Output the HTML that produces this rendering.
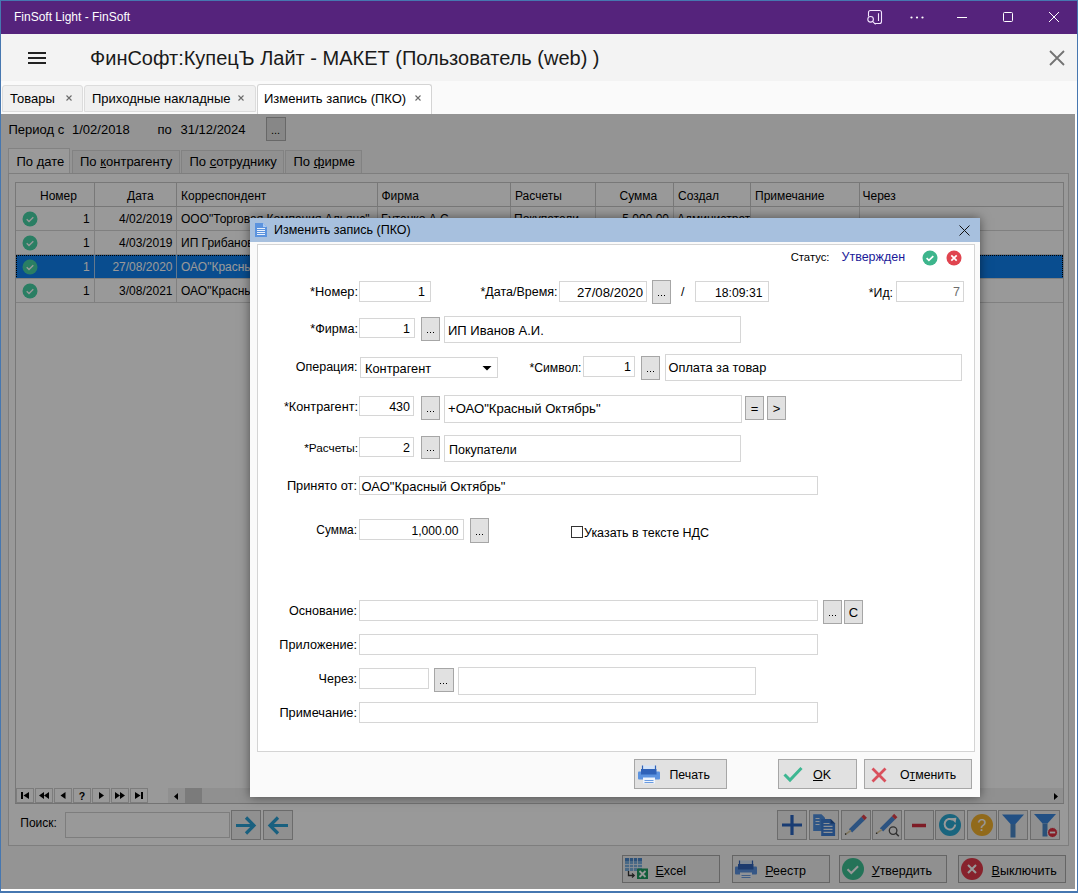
<!DOCTYPE html>
<html><head><meta charset="utf-8">
<style>
*{box-sizing:border-box;margin:0;padding:0}
html,body{width:1078px;height:893px;overflow:hidden;background:#fff}
body{font-family:"Liberation Sans",sans-serif;font-size:13px;color:#000;position:relative}
.a{position:absolute}
.t{position:absolute;white-space:nowrap;line-height:1}
/* window */
#win{left:0;top:0;width:1078px;height:893px;border:1px solid #4677b0;border-width:1px 1px 2px 1px;background:#fff}
#titlebar{left:1px;top:1px;width:1076px;height:33px;background:#55237c}
#hdr{left:1px;top:34px;width:1076px;height:47px;background:#f3f3f3}
#tabstrip{left:1px;top:81px;width:1076px;height:33px;background:#fafafa}
.tab{position:absolute;top:85px;height:27px;background:#f0f0f0;border:1px solid #dcdcdc;border-radius:3px 3px 0 0}
.tab.act{top:84px;height:30px;background:#fff;border-color:#d4d4d4;border-bottom:none}
/* dimmed app */
#app{left:1px;top:114px;width:1074px;height:775px;background:#9b9b9b}
.dbtn{position:absolute;background:#979797;border:1px solid #6f6f6f}
.gtab{position:absolute;top:149px;height:24px;background:#989898;border:1px solid #8a8a8a;border-bottom:none}
/* modal */
#modal{left:250px;top:218px;width:730px;height:579px;background:#fafafa;box-shadow:0 0 10px rgba(0,0,0,.5)}
#mtitle{left:0;top:0;width:730px;height:23.5px;background:#a7c0de}
#mpanel{left:7px;top:26px;width:718px;height:508px;background:#fff;border:1px solid #d4d4d4}
.in{position:absolute;background:#fff;border:1px solid #d6d6d6;height:21px}
.bt{position:absolute;background:#e1e1e1;border:1px solid #a6a6a6}
.lbl{position:absolute;white-space:nowrap;line-height:1;font-size:12.5px;text-align:right}
</style></head>
<body>
<div id="win" class="a"></div>
<div id="titlebar" class="a"></div>
<div class="t" style="left:14px;top:11px;color:#fff;font-size:12px">FinSoft Light - FinSoft</div>
<div id="hdr" class="a"></div>
<svg class="a" style="left:860px;top:0px" width="218" height="33" viewBox="860 0 218 33">
<path d="M868.5 16.5V12.5a2 2 0 0 1 2-2h9a2 2 0 0 1 2 2v9a2 2 0 0 1-2 2h-5" fill="none" stroke="#f4e6ff" stroke-width="1.1"/>
<circle cx="870.6" cy="19.3" r="2.8" fill="none" stroke="#f4e6ff" stroke-width="1.1"/>
<path d="M872.6 21.4l3 3M878.5 13.2v7.8" stroke="#f4e6ff" stroke-width="1.1"/>
<circle cx="911.5" cy="17.5" r="1.1" fill="#fff"/><circle cx="917" cy="17.5" r="1.1" fill="#fff"/><circle cx="922.5" cy="17.5" r="1.1" fill="#fff"/>
<path d="M957 17.5h10" stroke="#fff" stroke-width="1"/>
<rect x="1003.5" y="12.5" width="9" height="9" rx="1" fill="none" stroke="#fff" stroke-width="1"/>
<path d="M1049 12l10 10M1059 12l-10 10" stroke="#fff" stroke-width="1"/>
</svg>
<svg class="a" style="left:1048px;top:49px" width="18" height="18" viewBox="0 0 18 18"><path d="M2 2l14 14M16 2L2 16" stroke="#737373" stroke-width="1.8"/></svg>

<div id="tabstrip" class="a"></div>
<!-- hamburger -->
<div class="a" style="left:28px;top:52px;width:18px;height:2px;background:#222"></div>
<div class="a" style="left:28px;top:57px;width:18px;height:2px;background:#222"></div>
<div class="a" style="left:28px;top:62px;width:18px;height:2px;background:#222"></div>
<div class="t" style="left:90px;top:48px;font-size:20px;color:#1a1a1a">ФинСофт:КупецЪ Лайт - МАКЕТ (Пользователь (web) )</div>

<div class="tab" style="left:2px;width:81px"></div>
<div class="t" style="left:10px;top:92px;font-size:13px">Товары</div>
<svg class="a" style="left:66px;top:95px" width="6" height="6" viewBox="0 0 6 6"><path d="M0.5 0.5l5 5M5.5 0.5l-5 5" stroke="#6a6a6a" stroke-width="1.1"/></svg>
<div class="tab" style="left:84px;width:172px"></div>
<div class="t" style="left:92px;top:92px;font-size:13px">Приходные накладные</div>
<svg class="a" style="left:238px;top:95px" width="6" height="6" viewBox="0 0 6 6"><path d="M0.5 0.5l5 5M5.5 0.5l-5 5" stroke="#6a6a6a" stroke-width="1.1"/></svg>
<div class="tab act" style="left:257px;width:175px"></div>
<div class="t" style="left:264px;top:92px;font-size:13px">Изменить запись (ПКО)</div>
<svg class="a" style="left:415px;top:95px" width="6" height="6" viewBox="0 0 6 6"><path d="M0.5 0.5l5 5M5.5 0.5l-5 5" stroke="#6a6a6a" stroke-width="1.1"/></svg>

<div id="app" class="a" style="background:#f7f7f7">
  <!-- period -->
  <div class="t" style="left:7.5px;top:9px;font-size:13px">Период с</div>
  <div class="t" style="left:71px;top:9px;font-size:13px">1/02/2018</div>
  <div class="t" style="left:156.5px;top:9px;font-size:13px">по</div>
  <div class="t" style="left:179.5px;top:9px;font-size:13px">31/12/2024</div>
  <div class="a" style="left:265px;top:3px;width:20px;height:24px;background:#e1e1e1;border:1px solid #adadad"></div>
  <div class="t" style="left:270px;top:11px;font-size:11px">...</div>
  <!-- tabs -->
  <div class="a" style="left:7px;top:34px;width:62px;height:25px;background:#fff;border:1px solid #d9d9d9;border-bottom:none"></div>
  <div class="t" style="left:15.5px;top:41.2px;font-size:13px">По дате</div>
  <div class="a" style="left:70.5px;top:35.5px;width:108px;height:23px;background:#f0f0f0;border:1px solid #d9d9d9;border-bottom:none"></div>
  <div class="t" style="left:79px;top:41.2px;font-size:13px">По <u>к</u>онтрагенту</div>
  <div class="a" style="left:180px;top:35.5px;width:103px;height:23px;background:#f0f0f0;border:1px solid #d9d9d9;border-bottom:none"></div>
  <div class="t" style="left:188.5px;top:41.2px;font-size:13px">По <u>с</u>отруднику</div>
  <div class="a" style="left:284px;top:35.5px;width:77px;height:23px;background:#f0f0f0;border:1px solid #d9d9d9;border-bottom:none"></div>
  <div class="t" style="left:292.5px;top:41.2px;font-size:13px">По <u>ф</u>ирме</div>
  <!-- outer panel -->
  <div class="a" style="left:7px;top:59px;width:1061px;height:673px;background:#fff;border:1px solid #d2d2d2"></div>
  <!--GR-->
  <div class="a" style="left:14px;top:68px;width:1049px;height:622px;background:#fff;border:1px solid #c8c8c8"></div>
  <div class="a" style="left:15px;top:92px;width:1047px;height:1px;background:#c6c6c6"></div>
  <div class="a" style="left:93px;top:69px;width:1px;height:23px;background:#c8c8c8"></div>
  <div class="a" style="left:175px;top:69px;width:1px;height:23px;background:#c8c8c8"></div>
  <div class="a" style="left:376px;top:69px;width:1px;height:23px;background:#c8c8c8"></div>
  <div class="a" style="left:509px;top:69px;width:1px;height:23px;background:#c8c8c8"></div>
  <div class="a" style="left:594px;top:69px;width:1px;height:23px;background:#c8c8c8"></div>
  <div class="a" style="left:672px;top:69px;width:1px;height:23px;background:#c8c8c8"></div>
  <div class="a" style="left:749px;top:69px;width:1px;height:23px;background:#c8c8c8"></div>
  <div class="a" style="left:858px;top:69px;width:1px;height:23px;background:#c8c8c8"></div>
  <div class="t" style="left:39px;top:76.34px;font-size:12px">Номер</div>
  <div class="t" style="left:126px;top:76.34px;font-size:12px">Дата</div>
  <div class="t" style="left:180px;top:76.34px;font-size:12px">Корреспондент</div>
  <div class="t" style="left:380.5px;top:76.34px;font-size:12px">Фирма</div>
  <div class="t" style="left:514px;top:76.34px;font-size:12px">Расчеты</div>
  <div class="t" style="left:618.5px;top:76.34px;font-size:12px">Сумма</div>
  <div class="t" style="left:677px;top:76.34px;font-size:12px">Создал</div>
  <div class="t" style="left:754px;top:76.34px;font-size:12px">Примечание</div>
  <div class="t" style="left:861.5px;top:76.34px;font-size:12px">Через</div>
  <div class="a" style="left:15px;top:116px;width:1047px;height:1px;background:#d5d5d5"></div>
  <div class="a" style="left:93px;top:93px;width:1px;height:23px;background:#d5d5d5"></div>
  <div class="a" style="left:175px;top:93px;width:1px;height:23px;background:#d5d5d5"></div>
  <div class="a" style="left:376px;top:93px;width:1px;height:23px;background:#d5d5d5"></div>
  <div class="a" style="left:509px;top:93px;width:1px;height:23px;background:#d5d5d5"></div>
  <div class="a" style="left:594px;top:93px;width:1px;height:23px;background:#d5d5d5"></div>
  <div class="a" style="left:672px;top:93px;width:1px;height:23px;background:#d5d5d5"></div>
  <div class="a" style="left:749px;top:93px;width:1px;height:23px;background:#d5d5d5"></div>
  <div class="a" style="left:858px;top:93px;width:1px;height:23px;background:#d5d5d5"></div>
  <svg class="a" style="left:21px;top:97px" width="16" height="16" viewBox="0 0 16 16"><circle cx="8" cy="8" r="7.5" fill="#46d2a6"/><path d="M4.7 8.3l2.3 2.2 4.3-4.3" fill="none" stroke="#fff" stroke-width="1.4"/></svg>
  <div class="t" style="right:985.3px;top:99.24px;font-size:12px;color:#000">1</div>
  <div class="t" style="right:902.5px;top:99.24px;font-size:12px;color:#000">4/02/2019</div>
  <div class="a" style="left:176px;top:93px;width:199px;height:23px;overflow:hidden"><div class="t" style="left:4px;top:6.24px;font-size:12px;color:#000">ООО"Торговая Компания Альянс"</div></div>
  <div class="t" style="left:380px;top:99.24px;font-size:12px;color:#000">Бутенко А.С.</div>
  <div class="t" style="left:513px;top:99.24px;font-size:12px;color:#000">Покупатели</div>
  <div class="t" style="right:406px;top:99.24px;font-size:12px;color:#000">5,000.00</div>
  <div class="a" style="left:673px;top:93px;width:76px;height:23px;overflow:hidden"><div class="t" style="left:3px;top:6.24px;font-size:12px;color:#000">Администратор</div></div>
  <div class="a" style="left:15px;top:140px;width:1047px;height:1px;background:#d5d5d5"></div>
  <div class="a" style="left:93px;top:117px;width:1px;height:23px;background:#d5d5d5"></div>
  <div class="a" style="left:175px;top:117px;width:1px;height:23px;background:#d5d5d5"></div>
  <div class="a" style="left:376px;top:117px;width:1px;height:23px;background:#d5d5d5"></div>
  <div class="a" style="left:509px;top:117px;width:1px;height:23px;background:#d5d5d5"></div>
  <div class="a" style="left:594px;top:117px;width:1px;height:23px;background:#d5d5d5"></div>
  <div class="a" style="left:672px;top:117px;width:1px;height:23px;background:#d5d5d5"></div>
  <div class="a" style="left:749px;top:117px;width:1px;height:23px;background:#d5d5d5"></div>
  <div class="a" style="left:858px;top:117px;width:1px;height:23px;background:#d5d5d5"></div>
  <svg class="a" style="left:21px;top:121px" width="16" height="16" viewBox="0 0 16 16"><circle cx="8" cy="8" r="7.5" fill="#46d2a6"/><path d="M4.7 8.3l2.3 2.2 4.3-4.3" fill="none" stroke="#fff" stroke-width="1.4"/></svg>
  <div class="t" style="right:985.3px;top:123.24px;font-size:12px;color:#000">1</div>
  <div class="t" style="right:902.5px;top:123.24px;font-size:12px;color:#000">4/03/2019</div>
  <div class="a" style="left:176px;top:117px;width:199px;height:23px;overflow:hidden"><div class="t" style="left:4px;top:6.24px;font-size:12px;color:#000">ИП Грибанов В.П.</div></div>
  <div class="a" style="left:15px;top:141px;width:1047px;height:24px;background:#1080ee;outline:1px dotted #000;outline-offset:-1px"></div>
  <div class="a" style="left:15px;top:164px;width:1047px;height:1px;background:#d5d5d5"></div>
  <div class="a" style="left:93px;top:141px;width:1px;height:23px;background:#a8c8ea"></div>
  <div class="a" style="left:175px;top:141px;width:1px;height:23px;background:#a8c8ea"></div>
  <div class="a" style="left:376px;top:141px;width:1px;height:23px;background:#a8c8ea"></div>
  <div class="a" style="left:509px;top:141px;width:1px;height:23px;background:#a8c8ea"></div>
  <div class="a" style="left:594px;top:141px;width:1px;height:23px;background:#a8c8ea"></div>
  <div class="a" style="left:672px;top:141px;width:1px;height:23px;background:#a8c8ea"></div>
  <div class="a" style="left:749px;top:141px;width:1px;height:23px;background:#a8c8ea"></div>
  <div class="a" style="left:858px;top:141px;width:1px;height:23px;background:#a8c8ea"></div>
  <svg class="a" style="left:21px;top:145px" width="16" height="16" viewBox="0 0 16 16"><circle cx="8" cy="8" r="7.5" fill="#46d2a6"/><path d="M4.7 8.3l2.3 2.2 4.3-4.3" fill="none" stroke="#fff" stroke-width="1.4"/></svg>
  <div class="t" style="right:985.3px;top:147.24px;font-size:12px;color:#fff">1</div>
  <div class="t" style="right:902.5px;top:147.24px;font-size:12px;color:#fff">27/08/2020</div>
  <div class="a" style="left:176px;top:141px;width:199px;height:23px;overflow:hidden"><div class="t" style="left:4px;top:6.24px;font-size:12px;color:#fff">ОАО"Красный Октябрь"</div></div>
  <div class="a" style="left:15px;top:188px;width:1047px;height:1px;background:#d5d5d5"></div>
  <div class="a" style="left:93px;top:165px;width:1px;height:23px;background:#d5d5d5"></div>
  <div class="a" style="left:175px;top:165px;width:1px;height:23px;background:#d5d5d5"></div>
  <div class="a" style="left:376px;top:165px;width:1px;height:23px;background:#d5d5d5"></div>
  <div class="a" style="left:509px;top:165px;width:1px;height:23px;background:#d5d5d5"></div>
  <div class="a" style="left:594px;top:165px;width:1px;height:23px;background:#d5d5d5"></div>
  <div class="a" style="left:672px;top:165px;width:1px;height:23px;background:#d5d5d5"></div>
  <div class="a" style="left:749px;top:165px;width:1px;height:23px;background:#d5d5d5"></div>
  <div class="a" style="left:858px;top:165px;width:1px;height:23px;background:#d5d5d5"></div>
  <svg class="a" style="left:21px;top:169px" width="16" height="16" viewBox="0 0 16 16"><circle cx="8" cy="8" r="7.5" fill="#46d2a6"/><path d="M4.7 8.3l2.3 2.2 4.3-4.3" fill="none" stroke="#fff" stroke-width="1.4"/></svg>
  <div class="t" style="right:985.3px;top:171.24px;font-size:12px;color:#000">1</div>
  <div class="t" style="right:902.5px;top:171.24px;font-size:12px;color:#000">3/08/2021</div>
  <div class="a" style="left:176px;top:165px;width:199px;height:23px;overflow:hidden"><div class="t" style="left:4px;top:6.24px;font-size:12px;color:#000">ОАО"Красный Октябрь"</div></div>
<!--/GR-->
  <!-- nav bar -->
  <div class="a" style="left:15px;top:674px;width:18px;height:15px;background:#fff;border:1px solid #cfcfcf"></div>
  <svg class="a" style="left:15px;top:674px" width="18" height="15" viewBox="0 0 18 15" fill="#000"><rect x="5" y="4" width="2" height="7"/><path d="M13 4v7L7.5 7.5z"/></svg>
  <div class="a" style="left:34px;top:674px;width:18px;height:15px;background:#fff;border:1px solid #cfcfcf"></div>
  <svg class="a" style="left:34px;top:674px" width="18" height="15" viewBox="0 0 18 15" fill="#000"><path d="M9 4v7L4 7.5zM14 4v7L9 7.5z"/></svg>
  <div class="a" style="left:53px;top:674px;width:18px;height:15px;background:#fff;border:1px solid #cfcfcf"></div>
  <svg class="a" style="left:53px;top:674px" width="18" height="15" viewBox="0 0 18 15" fill="#000"><path d="M11.5 4v7L6.5 7.5z"/></svg>
  <div class="a" style="left:72px;top:674px;width:18px;height:15px;background:#fff;border:1px solid #cfcfcf"></div>
  <svg class="a" style="left:72px;top:674px" width="18" height="15" viewBox="0 0 18 15" fill="#000"><text x="9" y="11.5" font-family="Liberation Sans" font-weight="bold" font-size="10.5" text-anchor="middle">?</text></svg>
  <div class="a" style="left:91px;top:674px;width:18px;height:15px;background:#fff;border:1px solid #cfcfcf"></div>
  <svg class="a" style="left:91px;top:674px" width="18" height="15" viewBox="0 0 18 15" fill="#000"><path d="M7 4v7L12 7.5z"/></svg>
  <div class="a" style="left:110px;top:674px;width:18px;height:15px;background:#fff;border:1px solid #cfcfcf"></div>
  <svg class="a" style="left:110px;top:674px" width="18" height="15" viewBox="0 0 18 15" fill="#000"><path d="M4 4v7L9 7.5zM9 4v7L14 7.5z"/></svg>
  <div class="a" style="left:129px;top:674px;width:18px;height:15px;background:#fff;border:1px solid #cfcfcf"></div>
  <svg class="a" style="left:129px;top:674px" width="18" height="15" viewBox="0 0 18 15" fill="#000"><path d="M5 4v7L10.5 7.5z"/><rect x="11" y="4" width="2" height="7"/></svg>
  <div class="a" style="left:167px;top:674px;width:895px;height:16px;background:#f0f0f0"></div>
  <div class="a" style="left:184px;top:674px;width:17px;height:16px;background:#cdcdcd"></div>
  <svg class="a" style="left:167px;top:674px" width="17" height="16"><path d="M10 5v7L6 8.5z" fill="#000"/></svg>
  <svg class="a" style="left:1046px;top:674px" width="17" height="16"><path d="M7 5v7L11 8.5z" fill="#000"/></svg>
  <div class="a" style="left:14px;top:689px;width:1049px;height:1px;background:#c0c0c0"></div>
  <!-- search -->
  <div class="t" style="left:19.3px;top:703px;font-size:12px">Поиск:</div>
  <div class="a" style="left:64px;top:698px;width:165px;height:26px;background:#fff;border:1px solid #d0d0d0"></div>
  <div class="a" style="left:230px;top:696px;width:30px;height:30px;background:#f0f0f0;border:1px solid #b4b4b4"></div>
  <div class="a" style="left:262px;top:696px;width:30px;height:30px;background:#f0f0f0;border:1px solid #b4b4b4"></div>
  <svg class="a" style="left:230px;top:696px" width="30" height="30" viewBox="0 0 30 30"><path d="M5 15.5h18M15 7.5l8 8-8 8" fill="none" stroke="#2aa0d4" stroke-width="3.2"/></svg>
  <svg class="a" style="left:262px;top:696px" width="30" height="30" viewBox="0 0 30 30"><path d="M25 15.5H7M15 7.5l-8 8 8 8" fill="none" stroke="#2aa0d4" stroke-width="3.2"/></svg>
  <div class="a" style="left:776px;top:696px;width:30px;height:30px;background:#f0f0f0;border:1px solid #b4b4b4"></div>
  <svg class="a" style="left:776px;top:696px" width="30" height="30" viewBox="0 0 30 30"><path d="M15 5v20M5 15h20" stroke="#2a64c0" stroke-width="3.2"/></svg>
  <div class="a" style="left:808px;top:696px;width:30px;height:30px;background:#f0f0f0;border:1px solid #b4b4b4"></div>
  <svg class="a" style="left:808px;top:696px" width="30" height="30" viewBox="0 0 30 30"><path d="M4.2 4.2h8.3l3.5 3.5v13.3H4.2z" fill="#4f8fe0"/><path d="M6.5 8.5h4M6.5 11.5h4M6.5 14.5h4" stroke="#e8f0fb" stroke-width="1"/><path d="M12.2 9h9.4l4.5 4.5V26H12.2z" fill="#3f7fd6"/><path d="M21.6 9v4.5h4.5z" fill="#24559e"/><path d="M14.5 13.5h6M14.5 16.4h9M14.5 19.4h9M14.5 22.4h9" stroke="#e8f0fb" stroke-width="1.1"/></svg>
  <div class="a" style="left:839.5px;top:696px;width:30px;height:30px;background:#f0f0f0;border:1px solid #b4b4b4"></div>
  <svg class="a" style="left:839.5px;top:696px" width="30" height="30" viewBox="0 0 30 30"><path d="M9.5 20.8L22 8.5" stroke="#4a8ad8" stroke-width="4.6"/><path d="M22 8.5l2.3-2.3" stroke="#e0404a" stroke-width="4.6"/><path d="M4.4 24.3l5.5-3.8" stroke="#d8c8a0" stroke-width="1.6"/><circle cx="4.6" cy="24.1" r="0.8" fill="#333"/></svg>
  <div class="a" style="left:871px;top:696px;width:30px;height:30px;background:#f0f0f0;border:1px solid #b4b4b4"></div>
  <svg class="a" style="left:871px;top:696px" width="30" height="30" viewBox="0 0 30 30"><path d="M9.5 19.8L21.5 7.8" stroke="#4a8ad8" stroke-width="4.6"/><path d="M21.5 7.8l2.3-2.3" stroke="#e0404a" stroke-width="4.6"/><path d="M4.4 23.4l5.5-3.8" stroke="#d8c8a0" stroke-width="1.6"/><circle cx="4.6" cy="23.2" r="0.8" fill="#333"/><circle cx="21.1" cy="20.6" r="3.8" fill="none" stroke="#505050" stroke-width="1.3"/><path d="M23.8 23.3l3 3" stroke="#505050" stroke-width="1.6"/></svg>
  <div class="a" style="left:902.5px;top:696px;width:30px;height:30px;background:#f0f0f0;border:1px solid #b4b4b4"></div>
  <svg class="a" style="left:902.5px;top:696px" width="30" height="30" viewBox="0 0 30 30"><path d="M8 15.5h14" stroke="#d23040" stroke-width="3.5"/></svg>
  <div class="a" style="left:934px;top:696px;width:30px;height:30px;background:#f0f0f0;border:1px solid #b4b4b4"></div>
  <svg class="a" style="left:934px;top:696px" width="30" height="30" viewBox="0 0 30 30"><circle cx="15" cy="15" r="11" fill="#2aa8d2"/><path d="M20.2 14.5a5.3 5.3 0 1 1-2.2-4.6" fill="none" stroke="#fff" stroke-width="2"/><path d="M15.8 8.3l5.6-0.6-0.9 5.4z" fill="#fff"/></svg>
  <div class="a" style="left:965.5px;top:696px;width:30px;height:30px;background:#f0f0f0;border:1px solid #b4b4b4"></div>
  <svg class="a" style="left:965.5px;top:696px" width="30" height="30" viewBox="0 0 30 30"><circle cx="15" cy="15" r="11" fill="#f2b12e"/><text x="15" y="20.8" font-family="Liberation Sans" font-size="16" text-anchor="middle" fill="#fff">?</text></svg>
  <div class="a" style="left:997px;top:696px;width:30px;height:30px;background:#f0f0f0;border:1px solid #b4b4b4"></div>
  <svg class="a" style="left:997px;top:696px" width="30" height="30" viewBox="0 0 30 30"><path d="M4 4.5h22l-8.5 9.5h-5z" fill="#3a86dc"/><path d="M12.5 14h5v13.5h-5z" fill="#4a88c8"/></svg>
  <div class="a" style="left:1028.5px;top:696px;width:30px;height:30px;background:#f0f0f0;border:1px solid #b4b4b4"></div>
  <svg class="a" style="left:1028.5px;top:696px" width="30" height="30" viewBox="0 0 30 30"><path d="M4 4h22l-8.5 9.5h-5z" fill="#3a86dc"/><path d="M12.5 13.5h5v13h-5z" fill="#4a88c8"/><circle cx="22.5" cy="22.5" r="5" fill="#e03040" stroke="#f0f0f0" stroke-width="1"/><path d="M19.8 22.5h5.4" stroke="#fff" stroke-width="1.8"/></svg>
  <div class="a" style="left:621px;top:741px;width:98px;height:28px;background:#f0f0f0;border:1px solid #a9a9a9"></div>
  <div class="t" style="left:654.5px;top:751.2px;font-size:12.5px"><u>E</u>xcel</div>
  <svg class="a" style="left:621px;top:741px" width="30" height="28" viewBox="622 855 30 28"><rect x="625" y="858" width="17" height="13" fill="#7ab0e0"/><rect x="625" y="858" width="17" height="3" fill="#4a88cc"/><path d="M625 864.5h17M625 867.5h17M629.5 858v13M633.5 858v13M637.5 858v13" stroke="#e8f0f8" stroke-width="0.8"/><rect x="637" y="868.5" width="11" height="10.5" fill="#1f9c62"/><path d="M639.5 871l6 6M645.5 871l-6 6" stroke="#fff" stroke-width="1.8"/><path d="M628.5 871v4.5h5" fill="none" stroke="#333" stroke-width="1.3"/><path d="M632 873.5l2.2 2-2.2 2" fill="none" stroke="#333" stroke-width="1.2"/></svg>
  <div class="a" style="left:731px;top:741px;width:98px;height:28px;background:#f0f0f0;border:1px solid #a9a9a9"></div>
  <div class="t" style="left:764.3px;top:751.2px;font-size:12.5px"><u>Р</u>еестр</div>
  <svg class="a" style="left:732px;top:744px" width="30" height="28" viewBox="733 858 30 28"><rect x="739.5" y="860.5" width="13" height="5" fill="#d5e4f7"/><path d="M739.5 860.5v4M752.5 860.5v4" stroke="#2f62b8" stroke-width="1.2"/><rect x="735" y="866.5" width="22" height="8" rx="1" fill="#5b92df"/><rect x="738" y="864" width="15.5" height="5.5" fill="#2f62b8"/><rect x="740" y="872.5" width="12" height="6" fill="#eef4fc"/><path d="M741.5 875.5h9M741.5 877.5h9" stroke="#6a9be0" stroke-width="1"/></svg>
  <div class="a" style="left:838px;top:741px;width:108px;height:28px;background:#f0f0f0;border:1px solid #a9a9a9"></div>
  <div class="t" style="left:870.7px;top:751.2px;font-size:12.5px"><u>У</u>твердить</div>
  <svg class="a" style="left:839px;top:742px" width="26" height="26" viewBox="840 856 26 26"><circle cx="853" cy="869" r="11" fill="#3cc093"/><path d="M847.5 869.2l3.8 3.8 6.8-6.8" fill="none" stroke="#fff" stroke-width="2"/></svg>
  <div class="a" style="left:957px;top:741px;width:108px;height:28px;background:#f0f0f0;border:1px solid #a9a9a9"></div>
  <div class="t" style="left:990.6px;top:751.2px;font-size:12.5px"><u>В</u>ыключить</div>
  <svg class="a" style="left:958px;top:742px" width="26" height="26" viewBox="959 856 26 26"><circle cx="972" cy="869" r="11" fill="#e23a4a"/><path d="M968 865l8 8M976 865l-8 8" stroke="#fff" stroke-width="2"/></svg>
  <div class="a" style="left:0;top:0;width:1074px;height:775px;background:rgba(0,0,0,0.4)"></div>
</div>

<div id="modal" class="a">
  <div id="mtitle" class="a"></div>
  <div class="t" style="left:24px;top:6px;font-size:12.5px">Изменить запись (ПКО)</div>
  <div id="mpanel" class="a"></div>

  <svg class="a" style="left:5px;top:5px" width="12" height="14" viewBox="0 0 12 14"><path d="M0 0h8l4 4v10H0z" fill="#5b93de"/><path d="M8 0v4h4" fill="#a9c8f0"/><path d="M2 5.5h8M2 7.5h8M2 9.5h8M2 11.5h8" stroke="#e8f0fb" stroke-width="1"/></svg>
  <svg class="a" style="left:709px;top:7px" width="11" height="11" viewBox="0 0 11 11"><path d="M0.5 0.5l10 10M10.5 0.5l-10 10" stroke="#111" stroke-width="1"/></svg>
<!--MB-->
  <div class="t" style="right:150.5px;top:34.23px;font-size:11.3px;color:#000">Статус:</div>
  <div class="t" style="left:591.5px;top:33.42px;font-size:12.5px;color:#1a1a99">Утвержден</div>
  <svg class="a" style="left:672px;top:32px" width="16" height="16" viewBox="0 0 16 16"><circle cx="8" cy="8" r="7.5" fill="#3db58c"/><path d="M4.6 8.2l2.3 2.2 4.4-4.3" fill="none" stroke="#fff" stroke-width="1.7"/></svg>
  <svg class="a" style="left:696px;top:32px" width="16" height="16" viewBox="0 0 16 16"><circle cx="8" cy="8" r="7.5" fill="#e0444f"/><path d="M5.3 5.3l5.4 5.4M10.7 5.3l-5.4 5.4" stroke="#fff" stroke-width="1.7"/></svg>
  <div class="t" style="right:622px;top:68.16px;font-size:12.8px;color:#000">*Номер:</div>
  <div class="in" style="left:109px;top:63px;width:72px;height:21px"></div>
  <div class="t" style="right:555px;top:68.42px;font-size:12.5px;color:#000">1</div>
  <div class="t" style="right:422.5px;top:68.42px;font-size:12.5px;color:#000">*Дата/Время:</div>
  <div class="in" style="left:309px;top:63px;width:88px;height:21px"></div>
  <div class="t" style="right:337px;top:67.83px;font-size:13.2px;color:#000">27/08/2020</div>
  <div class="bt" style="left:402px;top:62px;width:19px;height:24px"></div>
  <div class="a" style="left:407.5px;top:77px;width:1px;height:1px;background:#000"></div>
  <div class="a" style="left:410.5px;top:77px;width:1px;height:1px;background:#000"></div>
  <div class="a" style="left:413.5px;top:77px;width:1px;height:1px;background:#000"></div>
  <div class="t" style="left:431px;top:68.42px;font-size:12.5px;color:#000">/</div>
  <div class="in" style="left:445px;top:63px;width:74px;height:21px"></div>
  <div class="t" style="right:217.5px;top:68.67px;font-size:12.2px;color:#000">18:09:31</div>
  <div class="t" style="right:87px;top:68.59px;font-size:12.3px;color:#000">*Ид:</div>
  <div class="in" style="left:646px;top:63px;width:68px;height:21px"></div>
  <div class="t" style="right:20px;top:68.42px;font-size:12.5px;color:#6d6d6d">7</div>
  <div class="t" style="right:622px;top:105.33px;font-size:12.6px;color:#000">*Фирма:</div>
  <div class="in" style="left:109px;top:100px;width:56px;height:20px"></div>
  <div class="t" style="right:570px;top:105.42px;font-size:12.5px;color:#000">1</div>
  <div class="bt" style="left:171px;top:99px;width:19px;height:24px"></div>
  <div class="a" style="left:176.5px;top:114px;width:1px;height:1px;background:#000"></div>
  <div class="a" style="left:179.5px;top:114px;width:1px;height:1px;background:#000"></div>
  <div class="a" style="left:182.5px;top:114px;width:1px;height:1px;background:#000"></div>
  <div class="in" style="left:194px;top:98px;width:297px;height:27px"></div>
  <div class="t" style="left:198px;top:106.00px;font-size:13px;color:#000">ИП Иванов А.И.</div>
  <div class="t" style="right:622.5px;top:143.42px;font-size:12.5px;color:#000">Операция:</div>
  <div class="in" style="left:110px;top:139px;width:138px;height:21px"></div>
  <div class="t" style="left:115px;top:144.86px;font-size:12.8px;color:#000">Контрагент</div>
  <svg class="a" style="left:231px;top:146.5px" width="12" height="8"><path d="M1.5 1h9L6 5.5z" fill="#000"/></svg>
  <div class="t" style="right:398.5px;top:143.67px;font-size:12.2px;color:#000">*Символ:</div>
  <div class="in" style="left:333px;top:138px;width:52px;height:21px"></div>
  <div class="t" style="right:349px;top:143.42px;font-size:12.5px;color:#000">1</div>
  <div class="bt" style="left:391px;top:138px;width:19px;height:24px"></div>
  <div class="a" style="left:396.5px;top:153px;width:1px;height:1px;background:#000"></div>
  <div class="a" style="left:399.5px;top:153px;width:1px;height:1px;background:#000"></div>
  <div class="a" style="left:402.5px;top:153px;width:1px;height:1px;background:#000"></div>
  <div class="in" style="left:415px;top:136px;width:297px;height:27px"></div>
  <div class="t" style="left:418.5px;top:144.16px;font-size:12.8px;color:#000">Оплата за товар</div>
  <div class="t" style="right:622px;top:183.25px;font-size:12.7px;color:#000">*Контрагент:</div>
  <div class="in" style="left:109px;top:178px;width:55px;height:20px"></div>
  <div class="t" style="right:570px;top:183.42px;font-size:12.5px;color:#000">430</div>
  <div class="bt" style="left:171px;top:178px;width:19px;height:24px"></div>
  <div class="a" style="left:176.5px;top:193px;width:1px;height:1px;background:#000"></div>
  <div class="a" style="left:179.5px;top:193px;width:1px;height:1px;background:#000"></div>
  <div class="a" style="left:182.5px;top:193px;width:1px;height:1px;background:#000"></div>
  <div class="in" style="left:194px;top:177px;width:298px;height:28px"></div>
  <div class="t" style="left:198px;top:184.41px;font-size:13.1px;color:#000">+ОАО"Красный Октябрь"</div>
  <div class="bt" style="left:495px;top:178px;width:19px;height:24px"></div>
  <div class="t" style="left:495px;top:178px;width:19px;height:24px;display:flex;align-items:center;justify-content:center;font-size:13px">=</div>
  <div class="bt" style="left:517px;top:178px;width:19px;height:24px"></div>
  <div class="t" style="left:517px;top:178px;width:19px;height:24px;display:flex;align-items:center;justify-content:center;font-size:13px">&gt;</div>
  <div class="t" style="right:622px;top:225.01px;font-size:11.8px;color:#000">*Расчеты:</div>
  <div class="in" style="left:109px;top:219px;width:55px;height:20px"></div>
  <div class="t" style="right:570px;top:224.42px;font-size:12.5px;color:#000">2</div>
  <div class="bt" style="left:171px;top:218px;width:19px;height:23px"></div>
  <div class="a" style="left:176.5px;top:232px;width:1px;height:1px;background:#000"></div>
  <div class="a" style="left:179.5px;top:232px;width:1px;height:1px;background:#000"></div>
  <div class="a" style="left:182.5px;top:232px;width:1px;height:1px;background:#000"></div>
  <div class="in" style="left:194px;top:217px;width:297px;height:27px"></div>
  <div class="t" style="left:199px;top:225.92px;font-size:12.5px;color:#000">Покупатели</div>
  <div class="t" style="right:623px;top:261.66px;font-size:12.8px;color:#000">Принято от:</div>
  <div class="in" style="left:109px;top:258px;width:459px;height:19px"></div>
  <div class="t" style="left:111.5px;top:261.50px;font-size:13px;color:#000">ОАО"Красный Октябрь"</div>
  <div class="t" style="right:623px;top:306.93px;font-size:11.9px;color:#000">Сумма:</div>
  <div class="in" style="left:109px;top:301px;width:105px;height:21px"></div>
  <div class="t" style="right:521.5px;top:306.76px;font-size:12.1px;color:#000">1,000.00</div>
  <div class="bt" style="left:220px;top:300px;width:19px;height:25px"></div>
  <div class="a" style="left:225.5px;top:316px;width:1px;height:1px;background:#000"></div>
  <div class="a" style="left:228.5px;top:316px;width:1px;height:1px;background:#000"></div>
  <div class="a" style="left:231.5px;top:316px;width:1px;height:1px;background:#000"></div>
  <div class="a" style="left:321px;top:308px;width:12px;height:12px;border:1px solid #333;background:#fff"></div>
  <div class="t" style="left:334px;top:309.42px;font-size:12.5px;color:#000">Указать в тексте НДС</div>
  <div class="t" style="right:623px;top:386.83px;font-size:12.6px;color:#000">Основание:</div>
  <div class="in" style="left:109px;top:382px;width:459px;height:21px"></div>
  <div class="bt" style="left:573px;top:382px;width:19px;height:24px"></div>
  <div class="a" style="left:578.5px;top:397px;width:1px;height:1px;background:#000"></div>
  <div class="a" style="left:581.5px;top:397px;width:1px;height:1px;background:#000"></div>
  <div class="a" style="left:584.5px;top:397px;width:1px;height:1px;background:#000"></div>
  <div class="bt" style="left:594px;top:382px;width:19px;height:24px"></div>
  <div class="t" style="left:594px;top:382px;width:19px;height:24px;display:flex;align-items:center;justify-content:center;font-size:13px">C</div>
  <div class="t" style="right:623px;top:420.79px;font-size:12.65px;color:#000">Приложение:</div>
  <div class="in" style="left:109px;top:416px;width:459px;height:21px"></div>
  <div class="t" style="right:623px;top:454.83px;font-size:12.6px;color:#000">Через:</div>
  <div class="in" style="left:109px;top:450px;width:70px;height:21px"></div>
  <div class="bt" style="left:184px;top:450px;width:20px;height:24px"></div>
  <div class="a" style="left:190.0px;top:465px;width:1px;height:1px;background:#000"></div>
  <div class="a" style="left:193.0px;top:465px;width:1px;height:1px;background:#000"></div>
  <div class="a" style="left:196.0px;top:465px;width:1px;height:1px;background:#000"></div>
  <div class="in" style="left:208px;top:449px;width:298px;height:28px"></div>
  <div class="t" style="right:623px;top:488.66px;font-size:12.8px;color:#000">Примечание:</div>
  <div class="in" style="left:109px;top:484px;width:459px;height:21px"></div>
<!--/MB-->
  <div class="bt" style="left:384px;top:541px;width:93px;height:30px"></div>
  <svg class="a" style="left:386px;top:545px" width="26" height="22" viewBox="636 763 26 22"><rect x="642.5" y="765.5" width="13" height="5" fill="#d5e4f7"/><path d="M642.5 765.5v4M655.5 765.5v4" stroke="#2f62b8" stroke-width="1.2"/><rect x="638" y="771.5" width="22" height="8" rx="1" fill="#5b92df"/><rect x="641" y="769" width="15.5" height="5.5" fill="#2f62b8"/><rect x="643" y="777.5" width="12" height="6" fill="#eef4fc"/><path d="M644.5 780.5h9M644.5 782.5h9" stroke="#6a9be0" stroke-width="1"/></svg>
  <div class="t" style="left:419.5px;top:551.4px;font-size:12.3px">Печать</div>
  <div class="bt" style="left:528px;top:541px;width:79px;height:30px"></div>
  <svg class="a" style="left:532px;top:547px" width="22" height="18" viewBox="0 0 22 18"><path d="M2.5 9.5l5.5 5.5L19.5 3" fill="none" stroke="#3db792" stroke-width="3"/></svg>
  <div class="t" style="left:563px;top:551.4px;font-size:12.5px"><u>O</u>K</div>
  <div class="bt" style="left:614px;top:541px;width:108px;height:30px"></div>
  <svg class="a" style="left:621px;top:549px" width="16" height="16" viewBox="0 0 16 16"><path d="M1.5 1.5l13 13M14.5 1.5l-13 13" stroke="#d9505c" stroke-width="2.8"/></svg>
  <div class="t" style="left:650px;top:551.4px;font-size:12.3px">О<u>т</u>менить</div>

</div>
</body></html>
